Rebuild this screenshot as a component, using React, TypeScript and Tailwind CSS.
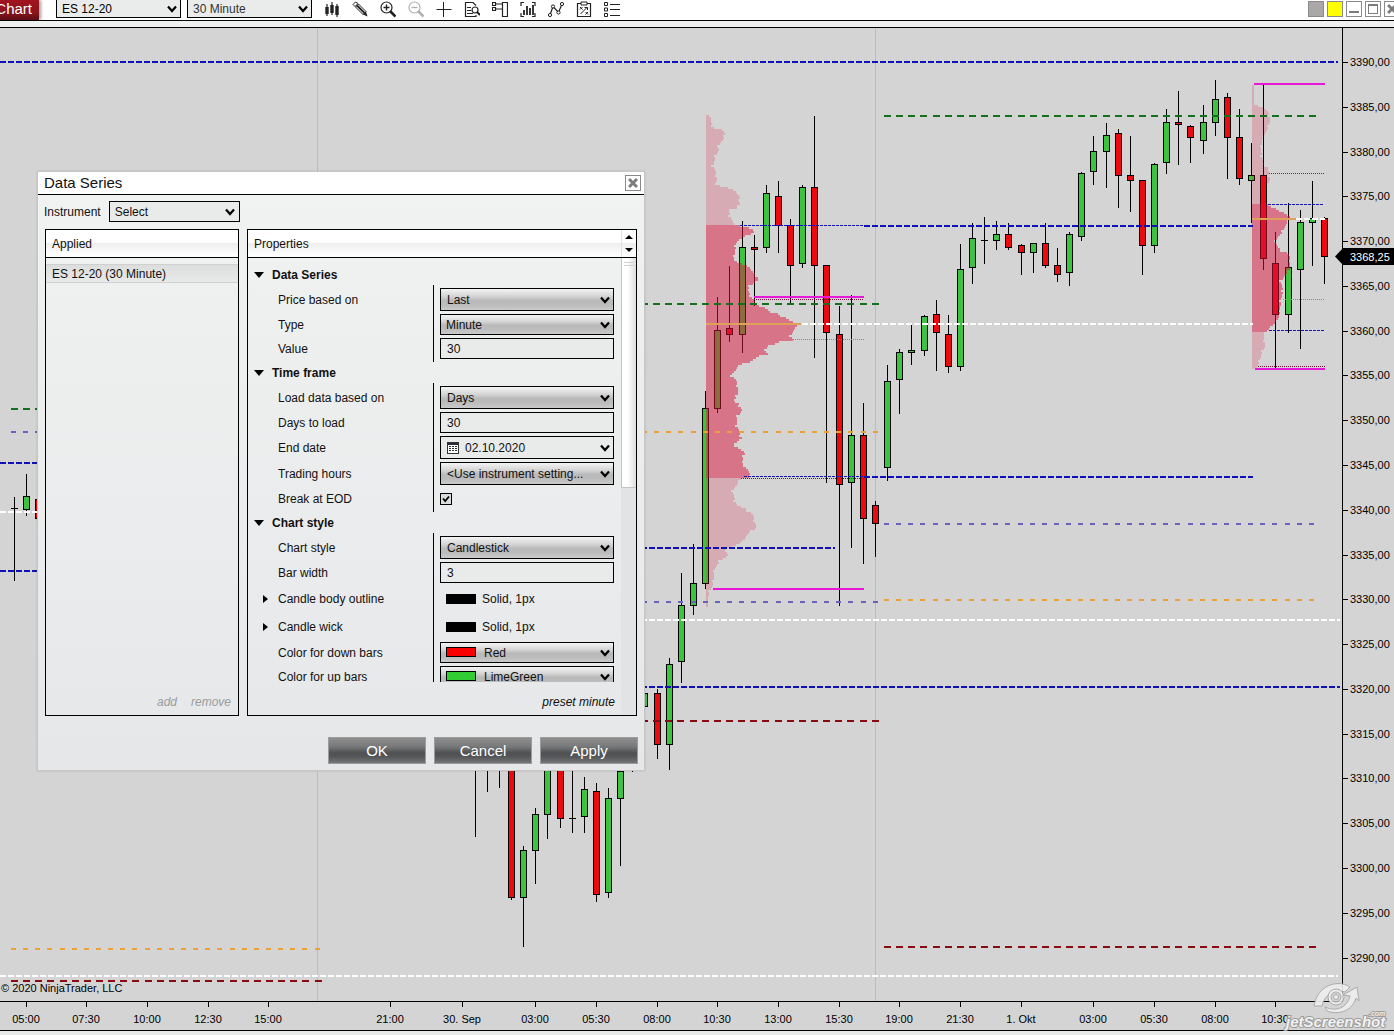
import { useMemo } from "react";
import type { ReactNode } from "react";
import clsx from "clsx";

type Candle = [x: number, high: number, low: number, top: number, bottom: number, color: "u" | "d"];
type ProfilePoint = [y: number, x: number];

const UP = "#3cc43e";
const DOWN = "#ec0a0e";
const CRIMSON = "#dc143c";

// x, wick top, wick bottom, body top, body bottom, direction
const CANDLES: Candle[] = [
  [14, 497, 581, 508, 508, "u"],
  [26, 474, 516, 496, 510, "u"],
  [38, 490, 530, 499, 519, "d"],
  [475, 760, 837, 760, 762, "d"],
  [487, 760, 792, 760, 762, "d"],
  [499, 760, 788, 760, 762, "d"],
  [511, 760, 900, 760, 898, "d"],
  [523, 846, 947, 850, 898, "u"],
  [535, 808, 884, 814, 851, "u"],
  [547, 760, 839, 760, 815, "u"],
  [560, 760, 828, 760, 819, "d"],
  [572, 760, 833, 818, 818, "u"],
  [584, 777, 833, 789, 817, "u"],
  [596, 783, 902, 791, 895, "d"],
  [608, 788, 898, 798, 893, "u"],
  [620, 760, 866, 771, 799, "u"],
  [632, 740, 772, 740, 760, "u"],
  [644, 690, 710, 693, 707, "u"],
  [657, 689, 759, 693, 745, "d"],
  [669, 658, 770, 664, 745, "u"],
  [681, 573, 683, 605, 662, "u"],
  [693, 544, 615, 583, 606, "u"],
  [705, 391, 589, 408, 584, "u"],
  [717, 297, 413, 330, 409, "u"],
  [729, 266, 342, 328, 335, "d"],
  [742, 221, 353, 247, 335, "u"],
  [754, 235, 306, 247, 250, "d"],
  [766, 185, 253, 193, 248, "u"],
  [778, 181, 253, 196, 226, "d"],
  [790, 219, 304, 225, 266, "d"],
  [802, 185, 268, 187, 264, "u"],
  [814, 116, 358, 187, 266, "d"],
  [826, 265, 483, 265, 333, "d"],
  [839, 306, 606, 334, 485, "d"],
  [851, 295, 548, 435, 483, "u"],
  [863, 403, 564, 435, 519, "d"],
  [875, 501, 557, 505, 524, "d"],
  [887, 365, 481, 381, 468, "u"],
  [899, 349, 414, 352, 380, "u"],
  [911, 325, 365, 350, 353, "u"],
  [924, 315, 356, 316, 351, "u"],
  [936, 300, 371, 314, 333, "d"],
  [948, 315, 373, 334, 367, "d"],
  [960, 244, 371, 269, 367, "u"],
  [972, 223, 284, 238, 268, "u"],
  [984, 217, 264, 240, 240, "u"],
  [996, 221, 250, 234, 241, "u"],
  [1008, 223, 250, 234, 248, "d"],
  [1021, 244, 275, 245, 253, "d"],
  [1033, 243, 273, 243, 253, "u"],
  [1045, 223, 268, 243, 266, "d"],
  [1057, 248, 282, 265, 275, "d"],
  [1069, 232, 286, 234, 273, "u"],
  [1081, 172, 241, 173, 237, "u"],
  [1093, 136, 185, 151, 172, "u"],
  [1106, 123, 188, 135, 152, "u"],
  [1118, 129, 208, 133, 176, "d"],
  [1130, 136, 212, 175, 181, "d"],
  [1142, 180, 275, 180, 246, "d"],
  [1154, 163, 253, 164, 246, "u"],
  [1166, 109, 174, 122, 163, "u"],
  [1178, 91, 165, 122, 125, "d"],
  [1190, 125, 163, 126, 138, "d"],
  [1203, 105, 154, 122, 141, "u"],
  [1215, 80, 136, 99, 123, "u"],
  [1227, 93, 179, 97, 138, "d"],
  [1239, 109, 185, 137, 179, "d"],
  [1251, 143, 223, 175, 181, "u"],
  [1263, 85, 270, 175, 259, "d"],
  [1275, 232, 368, 263, 315, "d"],
  [1288, 203, 333, 267, 315, "u"],
  [1300, 210, 349, 222, 270, "u"],
  [1312, 181, 266, 218, 223, "u"],
  [1324, 217, 284, 218, 257, "d"],
];

const DASH = {
  blue: { color: "#1010b8", dash: "6 2", width: 2 },
  white: { color: "#ffffff", dash: "6 2", width: 2 },
  green: { color: "#14701c", dash: "7 5.14", width: 2 },
  maroon: { color: "#8b0a12", dash: "7 5.14", width: 2 },
  orange: { color: "#eca232", dash: "5 7.14", width: 2 },
  slate: { color: "#6a62bc", dash: "5 7.14", width: 2 },
  magenta: { color: "#e818d8", dash: undefined, width: 2 },
  gold: { color: "#dfa05a", dash: undefined, width: 2 },
  thinBlue: { color: "#1414c0", dash: "3 1", width: 1 },
  dots: { color: "#7a1040", dash: "1 1", width: 1 },
  tanDots: { color: "#b8862c", dash: "1 1", width: 1 },
  redDots: { color: "#9a1a1a", dash: "1 1", width: 1 },
};

const LEVELS: [kind: keyof typeof DASH, y: number, x1: number, x2: number][] = [
  ["blue", 62, 0, 1338],
  ["green", 116, 884, 1316],
  ["blue", 226, 864, 1253],
  ["thinBlue", 225, 740, 864],
  ["green", 304, 641, 879],
  ["magenta", 297, 754, 864],
  ["dots", 299, 754, 864],
  ["white", 324, 802, 1253],
  ["gold", 324, 706, 801],
  ["tanDots", 339, 793, 864],
  ["green", 409, 11, 60],
  ["slate", 432, 11, 60],
  ["blue", 463, 0, 60],
  ["white", 512, 0, 60],
  ["blue", 571, 0, 60],
  ["orange", 432, 642, 879],
  ["thinBlue", 476, 744, 864],
  ["dots", 478, 741, 864],
  ["blue", 477, 864, 1253],
  ["slate", 524, 884, 1316],
  ["blue", 548, 641, 835],
  ["magenta", 589, 713, 864],
  ["orange", 600, 884, 1316],
  ["slate", 602, 642, 879],
  ["white", 620, 641, 1340],
  ["blue", 687, 641, 1340],
  ["maroon", 721, 641, 879],
  ["maroon", 947, 884, 1316],
  ["orange", 949, 11, 320],
  ["white", 976, 0, 1338],
  ["maroon", 981, 11, 322],
  ["magenta", 84, 1254, 1325],
  ["redDots", 173, 1269, 1324],
  ["thinBlue", 204, 1268, 1324],
  ["white", 219, 1296, 1325],
  ["gold", 219, 1252, 1296],
  ["tanDots", 299, 1283, 1325],
  ["thinBlue", 330, 1269, 1325],
  ["dots", 366, 1258, 1325],
  ["magenta", 369, 1255, 1325],
];

const PROFILES: { left: number; opacity: number; points: ProfilePoint[] }[] = [
  {
    left: 706,
    opacity: 0.21,
    points: [
      [115, 711], [122, 711], [127, 714], [129, 722], [133, 725], [137, 724], [141, 721], [146, 718],
      [150, 719], [157, 715], [165, 713], [172, 716], [178, 717], [183, 715], [185, 722], [187, 728],
      [190, 735], [193, 737], [195, 741], [199, 738], [203, 740], [207, 737], [209, 729], [215, 730],
      [221, 733], [225, 735],
    ],
  },
  {
    left: 706,
    opacity: 0.5,
    points: [
      [225, 742], [227, 749], [230, 755], [234, 749], [237, 742], [240, 737], [245, 736], [260, 734],
      [263, 742], [265, 749], [269, 751], [273, 755], [278, 759], [282, 754], [286, 749], [290, 748],
      [295, 751], [303, 756], [306, 764], [309, 768], [311, 770], [313, 778], [316, 784], [320, 790],
      [322, 795], [324, 801], [326, 796], [330, 793], [334, 791], [339, 793], [341, 779], [345, 770],
      [349, 764], [353, 768], [356, 757], [361, 750], [363, 742], [367, 737], [370, 735], [374, 731],
      [380, 737], [390, 738], [396, 737], [400, 733], [403, 739], [410, 742], [416, 737], [424, 737],
      [430, 739], [437, 742], [443, 734], [447, 738], [452, 745], [457, 743], [462, 742], [468, 747],
      [475, 751], [478, 748],
    ],
  },
  {
    left: 706,
    opacity: 0.21,
    points: [
      [478, 741], [485, 736], [490, 733], [500, 735], [505, 738], [508, 746], [514, 753], [520, 755],
      [527, 756], [533, 748], [540, 744], [545, 734], [548, 726], [555, 728], [560, 720], [567, 715],
      [575, 714], [585, 713], [590, 709], [600, 708], [607, 707],
    ],
  },
  {
    left: 1252,
    opacity: 0.21,
    points: [
      [85, 1254], [103, 1254], [105, 1260], [110, 1267], [115, 1270], [121, 1270], [128, 1268],
      [133, 1265], [140, 1262], [150, 1261], [160, 1263], [165, 1265], [167, 1268], [172, 1269],
      [180, 1270], [184, 1266], [190, 1265], [204, 1264],
    ],
  },
  {
    left: 1252,
    opacity: 0.5,
    points: [
      [204, 1268], [207, 1273], [210, 1281], [214, 1287], [218, 1292], [221, 1287], [225, 1286],
      [232, 1282], [237, 1277], [241, 1275], [247, 1279], [250, 1282], [252, 1287], [255, 1290],
      [268, 1290], [275, 1285], [280, 1281], [290, 1283], [300, 1281], [310, 1280], [320, 1278],
      [326, 1270], [332, 1268],
    ],
  },
  {
    left: 1252,
    opacity: 0.21,
    points: [[332, 1264], [345, 1265], [355, 1261], [365, 1258], [369, 1253]],
  },
];

const TIMES: [string, number][] = [
  ["05:00", 26], ["07:30", 86], ["10:00", 147], ["12:30", 208], ["15:00", 268], ["21:00", 390],
  ["30. Sep", 462], ["03:00", 535], ["05:30", 596], ["08:00", 657], ["10:30", 717], ["13:00", 778],
  ["15:30", 839], ["19:00", 899], ["21:30", 960], ["1. Okt", 1021], ["03:00", 1093], ["05:30", 1154],
  ["08:00", 1215], ["10:30", 1275],
];

const PRICES = Array.from({ length: 21 }, (_, i) => ({
  label: `${3390 - i * 5},00`,
  y: Math.round(62 + i * 44.78),
}));

// Stepped outline: one bar for every two pixels of price, slightly ragged.
function profilePath(left: number, points: ProfilePoint[]): string {
  const first = points[0][0];
  const last = points[points.length - 1][0];
  let d = `M${left} ${first}`;
  let seg = 0;
  for (let y = first; y < last; y += 2) {
    while (seg < points.length - 2 && points[seg + 1][0] <= y) seg++;
    const [y0, x0] = points[seg];
    const [y1, x1] = points[seg + 1];
    const ragged = (y * 7) % 5 === 0 ? -2 : 0;
    const x = Math.max(left + 2, Math.round(x0 + ((x1 - x0) * (y - y0)) / (y1 - y0)) + ragged);
    d += `H${x}V${Math.min(y + 2, last)}`;
  }
  return `${d}H${left}Z`;
}

function CandleMark({ candle }: { candle: Candle }) {
  const [x, high, low, top, bottom, dir] = candle;
  return (
    <g>
      <rect x={x} y={high} width={1} height={low - high} fill="#000" />
      {top === bottom ? (
        <rect x={x - 3} y={top} width={7} height={1} fill="#000" />
      ) : (
        <rect
          x={x - 2.5}
          y={top + 0.5}
          width={6}
          height={bottom - top - 1}
          fill={dir === "u" ? UP : DOWN}
          stroke="#000"
        />
      )}
    </g>
  );
}

function Watermark() {
  return (
    <g>
      <g fill="#eeeeee" stroke="#a8a8a8" strokeWidth={1} opacity={0.9}>
        <path d="M1314 1006C1316 993 1325 984 1338 983.500C1343 983.500 1347 985 1350 987L1345 992C1334 989 1324 995 1322 1006Z" />
        <path d="M1325 1007C1336 1012 1347 1008 1350 996L1343 995L1357 987L1359 1001L1356 998C1353 1009 1341 1016 1327 1011Z" />
        <circle cx={1336} cy={997} r={8} />
        <circle cx={1336} cy={997} r={5} fill="#d4d4d4" />
        <circle cx={1336} cy={997} r={2.5} />
      </g>
      <g
        fontStyle="italic"
        fontWeight={700}
        fill="#f2f2f2"
        stroke="#9c9c9c"
        strokeWidth={2}
        paintOrder="stroke"
      >
        <text x={1286} y={1027} fontSize={15}>
          jetScreenshot
        </text>
        <text x={1369} y={1016} fontSize={7}>
          .com
        </text>
      </g>
    </g>
  );
}

function PriceChart() {
  const shapes = useMemo(() => PROFILES.map((p) => ({ ...p, d: profilePath(p.left, p.points) })), []);

  return (
    <svg
      viewBox="0 28 1394 1003"
      className="block h-auto w-full bg-[#d4d4d4]"
      fontFamily="'Liberation Sans', Arial, sans-serif"
      role="img"
      aria-label="ES 12-20 30 minute candlestick chart"
    >
      <g shapeRendering="crispEdges">
        <path d="M317.500 28V1001M875.500 28V1001" stroke="#bdbdbd" />
        {CANDLES.map((candle) => (
          <CandleMark key={candle[0]} candle={candle} />
        ))}
        {shapes.map((shape, index) => (
          <path key={index} d={shape.d} fill={CRIMSON} fillOpacity={shape.opacity} />
        ))}
        {LEVELS.map(([kind, y, x1, x2], index) => {
          const style = DASH[kind];
          const lineY = style.width === 1 ? y + 0.5 : y;
          return (
            <line
              key={index}
              x1={x1}
              x2={x2}
              y1={lineY}
              y2={lineY}
              stroke={style.color}
              strokeWidth={style.width}
              strokeDasharray={style.dash}
            />
          );
        })}
        <path d="M1342.500 28V1001.500M0 1001.500H1343M0 1030.500H1394" stroke="#000" fill="none" />
        {PRICES.map((p) => (
          <rect key={p.label} x={1343} y={p.y} width={5} height={1} />
        ))}
        {TIMES.map(([label, x]) => (
          <rect key={label + x} x={x} y={1002} width={1} height={5} />
        ))}
      </g>
      <g fontSize={11} fill="#000">
        {PRICES.map((p) => (
          <text key={p.label} x={1350} y={p.y + 4}>
            {p.label}
          </text>
        ))}
        {TIMES.map(([label, x]) => (
          <text key={label + x} x={x} y={1023} textAnchor="middle">
            {label}
          </text>
        ))}
        <text x={1} y={992}>
          © 2020 NinjaTrader, LLC
        </text>
        <path d="M1335 256.500L1343 248H1394V265H1343Z" />
        <text x={1350} y={261} fill="#fff">
          3368,25
        </text>
      </g>
      <Watermark />
    </svg>
  );
}

function Chevron({ className }: { className?: string }) {
  return (
    <svg
      viewBox="0 0 10 8"
      className={clsx("pointer-events-none absolute top-1/2 h-2 w-2.5 -translate-y-1/2", className)}
      aria-hidden="true"
    >
      <path d="M1 1.500L5 6L9 1.500" fill="none" stroke="#000" strokeWidth={2.2} />
    </svg>
  );
}

const METAL =
  "bg-[linear-gradient(to_bottom,#f4f4f4_0%,#d4d4d4_35%,#b9b9b9_55%,#bcbcbc_75%,#cacaca_100%)]";

interface DropdownProps {
  id?: string;
  label?: string;
  value: string;
  className?: string;
  chevron?: string;
  children?: ReactNode;
}

function Dropdown({ id, label, value, className, chevron = "right-1", children }: DropdownProps) {
  return (
    <div className="relative flex w-full">
      <select
        id={id}
        aria-label={label}
        className={clsx("w-full appearance-none border border-black pr-4 text-xs outline-none", className)}
      >
        <option>{value}</option>
      </select>
      {children}
      <Chevron className={chevron} />
    </div>
  );
}

const TOOLS: { name: string; icon: ReactNode }[] = [
  {
    name: "Bars",
    icon: (
      <>
        <path d="M3 3V15M8 1V14M13 3V16" fill="none" stroke="currentColor" strokeWidth={1.2} />
        <path d="M1.300 6H4.700V13H1.300ZM6.300 4H9.700V12H6.300ZM11.300 5H14.700V14H11.300Z" fill="currentColor" />
      </>
    ),
  },
  {
    name: "Draw",
    icon: (
      <>
        <path d="M1 3.500L3.500 1L6 2.500L3 5.500Z" fill="#fff" stroke="currentColor" />
        <path d="M3.500 6L6.500 3L14 10.500L11 13.500Z" fill="#fff" stroke="currentColor" />
        <path d="M5 4.500L12.500 12" stroke="currentColor" strokeWidth={1.8} />
        <path d="M11 13.500L14 10.500L15.500 15.500Z" fill="currentColor" />
      </>
    ),
  },
  {
    name: "Zoom in",
    icon: (
      <>
        <circle cx={6.500} cy={6.500} r={5.500} fill="none" stroke="currentColor" strokeWidth={1.2} />
        <path d="M3.500 6.500H9.500M6.500 3.500V9.500" stroke="currentColor" strokeWidth={1.4} />
        <path d="M10 10L15.500 15.500" stroke="currentColor" strokeWidth={2.6} />
      </>
    ),
  },
  {
    name: "Zoom out",
    icon: (
      <g className="text-[#b0b0b0]">
        <circle cx={6.500} cy={6.500} r={5.500} fill="none" stroke="currentColor" strokeWidth={1.2} />
        <path d="M3.500 6.500H9.500" stroke="currentColor" strokeWidth={1.4} />
        <path d="M10 10L15.500 15.500" stroke="currentColor" strokeWidth={2.6} />
      </g>
    ),
  },
  { name: "Crosshair", icon: <path d="M0.500 8.500H15.500M7.500 1V16" stroke="currentColor" /> },
  {
    name: "Data box",
    icon: (
      <>
        <path d="M12 4.500L9 1.500H1.500V15.500H12V14" fill="none" stroke="currentColor" strokeWidth={1.2} />
        <path d="M3 6.500H7M3 9.500H7M3 12.500H9" stroke="currentColor" />
        <circle cx={11} cy={9} r={3} fill="#fff" stroke="currentColor" strokeWidth={1.2} />
        <path d="M13 11L16 14" stroke="currentColor" strokeWidth={2} />
      </>
    ),
  },
  {
    name: "Chart trader",
    icon: (
      <path
        d="M0.500 1.500H3.500V4.500H0.500ZM0.500 6.500H3.500V9.500H0.500ZM3.500 3H10M10.500 1.500H15.500V15.500H10.500ZM3.500 8H10"
        fill="none"
        stroke="currentColor"
        strokeWidth={1.2}
      />
    ),
  },
  {
    name: "Data series",
    icon: (
      <>
        <path
          d="M4 1.500H1V5M12 1.500H15V5M4 15.500H1V12M12 15.500H15V12"
          fill="none"
          stroke="currentColor"
          strokeWidth={1.2}
        />
        <path d="M4 9V14M7 5V14M10 7V14M13 4V14" stroke="currentColor" strokeWidth={1.8} />
      </>
    ),
  },
  {
    name: "Indicators",
    icon: (
      <>
        <path d="M2 14L5 5.500L10.500 11.500L14 3" fill="none" stroke="currentColor" strokeWidth={1.2} />
        <g fill="#fff" stroke="currentColor">
          <circle cx={2} cy={14} r={1.6} />
          <circle cx={5} cy={5.500} r={1.6} />
          <circle cx={10.500} cy={11.500} r={1.6} />
          <circle cx={14} cy={3} r={1.6} />
        </g>
      </>
    ),
  },
  {
    name: "Strategies",
    icon: (
      <>
        <path d="M1.500 2.500H14.500V15.500H1.500Z" fill="none" stroke="currentColor" strokeWidth={1.2} />
        <path d="M5 1H11V4H5Z" fill="#fff" stroke="currentColor" />
        <path
          d="M4 6L6.500 8.500M6.500 6L4 8.500M9.500 11L12 13.500M12 11L9.500 13.500M4.500 13L11 6.500M8.500 6.500H11.500V9"
          fill="none"
          stroke="currentColor"
        />
      </>
    ),
  },
  {
    name: "Properties",
    icon: (
      <path
        d="M0.500 1.500H3.500V4.500H0.500ZM0.500 7H3.500V10H0.500ZM0.500 12.500H3.500V15.500H0.500ZM6 3.500H16M6 8.500H16M6 14.500H16"
        fill="none"
        stroke="currentColor"
      />
    ),
  },
];

function CrossGlyph() {
  return (
    <svg viewBox="0 0 16 16" className="h-3.5 w-3.5 shrink-0" aria-hidden="true">
      <path d="M3.500 3.500L12.500 12.500M12.500 3.500L3.500 12.500" stroke="#7c7c7c" strokeWidth={3.4} />
    </svg>
  );
}

function Toolbar() {
  const box = "flex h-4 w-4 shrink-0 items-center justify-center border border-[#8a8a8a]";
  return (
    <header className="flex h-[21px] items-start overflow-hidden border-b border-black bg-white">
      <div className="flex h-5 w-[39px] shrink-0 items-center justify-end bg-[linear-gradient(to_bottom,#a01420,#8c1420_60%,#5c0c14)] pr-[7px] pb-0.5 text-[15px] text-white shadow-[2px_0_3px_#00000060]">
        Chart
      </div>
      <div className="ml-[17px] w-[125px] shrink-0">
        <Dropdown label="Instrument" value="ES 12-20" className="h-[18px] border-t-0 bg-[#eaeceb] pl-[5px]" />
      </div>
      <div className="ml-1.5 w-[125px] shrink-0">
        <Dropdown
          label="Interval"
          value="30 Minute"
          className="h-[18px] border-t-0 bg-[#eaeceb] pl-[5px] text-[#333]"
        />
      </div>
      <div className="ml-1.5 flex">
        {TOOLS.map((tool) => (
          <button
            key={tool.name}
            type="button"
            aria-label={tool.name}
            className="flex h-[18px] w-7 items-center justify-center text-[#222]"
          >
            <svg viewBox="0 0 16 17" className="h-[17px] w-4" aria-hidden="true">
              {tool.icon}
            </svg>
          </button>
        ))}
      </div>
      <div className="-mr-1.5 ml-auto flex gap-[3px] pt-px">
        <button type="button" aria-label="Instrument link" className={clsx(box, "bg-[#a9a7a8]")} />
        <button type="button" aria-label="Interval link" className={clsx(box, "bg-[#ffff00]")} />
        <button type="button" aria-label="Minimize" className={box}>
          <span className="mt-1.5 h-0.5 w-2.5 bg-[#7c7c7c]" />
        </button>
        <button type="button" aria-label="Maximize" className={box}>
          <span className="h-2.5 w-2.5 border border-t-2 border-[#7c7c7c]" />
        </button>
        <button type="button" aria-label="Close" className={box}>
          <CrossGlyph />
        </button>
      </div>
    </header>
  );
}

interface RowProps {
  id?: string;
  label: string;
  expandable?: boolean;
  children: ReactNode;
}

function Row({ id, label, expandable, children }: RowProps) {
  return (
    <div className="flex">
      <div className="flex w-[186px] shrink-0 items-center border-r border-black pt-[3px] pl-[15px]">
        <span className="flex w-[15px] shrink-0">
          {expandable && (
            <svg viewBox="0 0 5 8" className="h-2 w-[5px]" aria-hidden="true">
              <path d="M0 0L5 4L0 8Z" />
            </svg>
          )}
        </span>
        {id ? <label htmlFor={id}>{label}</label> : <span>{label}</span>}
      </div>
      <div className="ml-1.5 flex w-[174px] pt-[3px]">{children}</div>
    </div>
  );
}

function Section({ title, children }: { title: string; children: ReactNode }) {
  return (
    <section>
      <h3 className="flex h-[21px] items-center gap-2 pl-1.5 font-bold">
        <svg viewBox="0 0 10 6" className="h-1.5 w-2.5" aria-hidden="true">
          <path d="M0 0H10L5 6Z" />
        </svg>
        {title}
      </h3>
      {children}
      <div className="h-[3px] w-[186px] border-r border-black" />
    </section>
  );
}

function TextField({ id, value }: { id: string; value: string }) {
  return (
    <input
      id={id}
      type="text"
      defaultValue={value}
      className="h-[21px] w-full border border-black bg-[#e9eaea] px-1.5 text-xs outline-none"
    />
  );
}

function Swatch({ className }: { className: string }) {
  return <span className={clsx("h-2.5 w-[30px] border border-black", className)} />;
}

function StrokeValue() {
  return (
    <div className="flex h-[25px] items-center gap-1.5 pl-1.5">
      <Swatch className="bg-black" />
      Solid, 1px
    </div>
  );
}

function CalendarIcon() {
  return (
    <svg
      viewBox="0 0 12 12"
      className="pointer-events-none absolute top-1/2 left-[7px] h-3 w-3 -translate-y-1/2"
      shapeRendering="crispEdges"
      aria-hidden="true"
    >
      <rect x={0.500} y={0.500} width={11} height={11} fill="#fff" stroke="#333" />
      <path d="M1 2H11" stroke="#2b2b3a" strokeWidth={2} />
      <path d="M2 4.500H10M2 6.500H10M2 8.500H10" stroke="#333" strokeDasharray="2 1" />
    </svg>
  );
}

const PANEL_HEADER =
  "flex h-[28px] shrink-0 items-center border-b border-black bg-[linear-gradient(to_bottom,#ffffff_50%,#eeeeee_50%,#fdfdfd_90%)]";

function PropertyList() {
  return (
    <div className="h-[424px] overflow-hidden pt-1.5">
      <Section title="Data Series">
        <Row id="price" label="Price based on">
          <Dropdown id="price" value="Last" className={clsx("h-[23px] pl-1.5", METAL)} />
        </Row>
        <Row id="type" label="Type">
          <Dropdown id="type" value="Minute" className={clsx("h-[21px] pl-[5px]", METAL)} />
        </Row>
        <Row id="value" label="Value">
          <TextField id="value" value="30" />
        </Row>
      </Section>
      <Section title="Time frame">
        <Row id="load" label="Load data based on">
          <Dropdown id="load" value="Days" className={clsx("h-[23px] pl-1.5", METAL)} />
        </Row>
        <Row id="days" label="Days to load">
          <TextField id="days" value="30" />
        </Row>
        <Row id="end" label="End date">
          <Dropdown id="end" value="02.10.2020" className="h-[23px] bg-[#e9eaea] pl-6">
            <CalendarIcon />
          </Dropdown>
        </Row>
        <Row id="hours" label="Trading hours">
          <Dropdown
            id="hours"
            value="<Use instrument setting..."
            className={clsx("h-[23px] pl-1.5", METAL)}
          />
        </Row>
        <Row id="eod" label="Break at EOD">
          <div className="relative flex h-[21px] items-center">
            <input
              id="eod"
              type="checkbox"
              defaultChecked
              className="h-3 w-3 appearance-none border border-black bg-[#dcdcdc]"
            />
            <svg
              viewBox="0 0 12 12"
              className="pointer-events-none absolute h-3 w-3"
              aria-hidden="true"
            >
              <path d="M3 5.500L5.200 8L9 3.500" fill="none" stroke="#000" strokeWidth={1.8} />
            </svg>
          </div>
        </Row>
      </Section>
      <Section title="Chart style">
        <Row id="style" label="Chart style">
          <Dropdown id="style" value="Candlestick" className={clsx("h-[23px] pl-1.5", METAL)} />
        </Row>
        <Row id="width" label="Bar width">
          <TextField id="width" value="3" />
        </Row>
        <Row label="Candle body outline" expandable>
          <StrokeValue />
        </Row>
        <Row label="Candle wick" expandable>
          <StrokeValue />
        </Row>
        <Row id="down" label="Color for down bars">
          <Dropdown id="down" value="Red" className={clsx("h-[21px] pl-[43px]", METAL)}>
            <Swatch className="pointer-events-none absolute top-[5px] left-1.5 bg-[#fa0000]" />
          </Dropdown>
        </Row>
        <Row id="up" label="Color for up bars">
          <Dropdown id="up" value="LimeGreen" className={clsx("h-[21px] pl-[43px]", METAL)}>
            <Swatch className="pointer-events-none absolute top-[5px] left-1.5 bg-[#32cd32]" />
          </Dropdown>
        </Row>
      </Section>
    </div>
  );
}

function DataSeriesDialog() {
  return (
    <div
      role="dialog"
      aria-labelledby="dialog-title"
      className="absolute top-[171px] left-[37px] w-[608px] border border-[#c4c6c8] bg-[linear-gradient(to_bottom,#f1f3f2,#e5e7e9)] text-xs text-[#111] shadow-[0_0_2px_#00000020]"
    >
      <div className="flex h-[23px] items-center justify-between border-b border-black bg-white pr-[3px] pl-1.5">
        <h2 id="dialog-title" className="text-[15px]">
          Data Series
        </h2>
        <button
          type="button"
          aria-label="Close dialog"
          className="flex h-4 w-4 items-center justify-center border border-[#8a8a8a]"
        >
          <CrossGlyph />
        </button>
      </div>

      <div className="flex items-center gap-2 px-1.5 pt-1.5">
        <label htmlFor="instrument">Instrument</label>
        <div className="w-[131px]">
          <Dropdown id="instrument" value="Select" className="h-[21px] bg-[#e9ebea] pl-[5px]" chevron="right-[5px]" />
        </div>
      </div>

      <div className="mt-[7px] flex h-[487px] gap-2 px-[7px]">
        <div className="flex w-[194px] flex-col border border-black">
          <div className={clsx(PANEL_HEADER, "pl-1.5")}>Applied</div>
          <ul className="pt-1.5">
            <li className="flex h-[19px] items-center border-y border-[#cfd1d1] bg-[linear-gradient(to_bottom,#dcdddd,#e8e9e9)] pl-1.5">
              ES 12-20 (30 Minute)
            </li>
          </ul>
          <div className="mt-auto flex justify-end gap-3.5 pr-[7px] pb-[5px] text-[#9a9c9e] italic">
            <button type="button">add</button>
            <button type="button">remove</button>
          </div>
        </div>

        <div className="flex min-w-0 flex-1 flex-col border border-black">
          <div className={clsx(PANEL_HEADER, "justify-between pl-1.5")}>
            Properties
            <div className="flex h-full w-[15px] flex-col items-center justify-around border-l border-[#e0e0e0]">
              <button type="button" aria-label="Scroll up">
                <svg viewBox="0 0 8 4" className="h-1 w-2" aria-hidden="true">
                  <path d="M0 4H8L4 0Z" />
                </svg>
              </button>
              <button type="button" aria-label="Scroll down">
                <svg viewBox="0 0 8 4" className="h-1 w-2" aria-hidden="true">
                  <path d="M0 0H8L4 4Z" />
                </svg>
              </button>
            </div>
          </div>
          <div className="flex min-h-0 flex-1">
            <div className="flex min-w-0 flex-1 flex-col">
              <PropertyList />
              <button type="button" className="mt-auto mr-1.5 mb-[5px] self-end italic">
                preset minute
              </button>
            </div>
            <div className="w-[15px] bg-[#e2e3e4]">
              <div className="flex h-[230px] flex-col items-center gap-0.5 border-b border-l border-[#c4c4c4] bg-[linear-gradient(to_right,#ffffff_40%,#dcdcdc)] pt-1">
                <span className="h-px w-2.5 bg-[#cfcfcf]" />
                <span className="h-px w-2.5 bg-[#cfcfcf]" />
              </div>
            </div>
          </div>
        </div>
      </div>

      <div className="flex justify-end gap-2 px-1.5 pt-[21px] pb-1.5">
        {["OK", "Cancel", "Apply"].map((name) => (
          <button
            key={name}
            type="button"
            className="h-[27px] w-[98px] border border-[#9b9c9e] bg-[linear-gradient(to_bottom,#8e8e8e_0%,#77787a_35%,#4e5052_60%,#545658_75%,#747678_100%)] text-[15px] text-white"
          >
            {name}
          </button>
        ))}
      </div>
    </div>
  );
}

export default function App() {
  return (
    <div className="relative min-h-screen overflow-hidden bg-[#e8eaea] font-['Liberation_Sans',Arial,sans-serif]">
      <Toolbar />
      <div className="h-[7px] border-b border-black bg-[#eef1ee]" />
      <main>
        <PriceChart />
      </main>
      <DataSeriesDialog />
    </div>
  );
}
